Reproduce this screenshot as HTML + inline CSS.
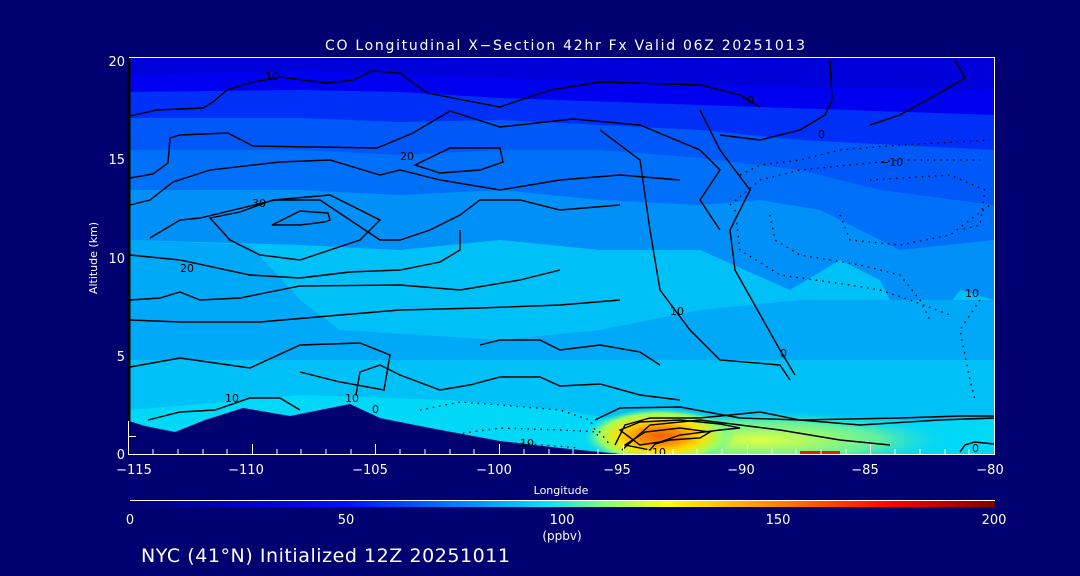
<!DOCTYPE html>
<html><head><meta charset="utf-8"><style>
html,body{margin:0;padding:0;background:#000070;width:1080px;height:576px;overflow:hidden}
svg{display:block}
text{font-family:"DejaVu Sans","Liberation Sans",sans-serif;fill:#fff}
</style></head><body>
<svg width="1080" height="576" viewBox="0 0 1080 576" xmlns="http://www.w3.org/2000/svg">
<defs>
<clipPath id="pc"><rect x="129" y="58" width="865" height="396"/></clipPath>
<linearGradient id="cb" x1="0" x2="1" y1="0" y2="0">
<stop offset="0" stop-color="#000070"/>
<stop offset="0.12" stop-color="#0000c0"/>
<stop offset="0.25" stop-color="#0010ff"/>
<stop offset="0.38" stop-color="#0080ff"/>
<stop offset="0.48" stop-color="#00e0ff"/>
<stop offset="0.55" stop-color="#80ff80"/>
<stop offset="0.62" stop-color="#ffff00"/>
<stop offset="0.75" stop-color="#ff8000"/>
<stop offset="0.88" stop-color="#ff0000"/>
<stop offset="1" stop-color="#800000"/>
</linearGradient>
<radialGradient id="hot" cx="0.5" cy="0.5" r="0.5">
<stop offset="0" stop-color="#f06000"/>
<stop offset="0.3" stop-color="#ff9000"/>
<stop offset="0.55" stop-color="#ffe000"/>
<stop offset="0.8" stop-color="#a0ff60"/>
<stop offset="1" stop-color="#40f0c0" stop-opacity="0"/>
</radialGradient>
<radialGradient id="glow" cx="0.5" cy="0.5" r="0.5">
<stop offset="0" stop-color="#e0ff40"/>
<stop offset="0.6" stop-color="#60f0a0"/>
<stop offset="1" stop-color="#00d0f8" stop-opacity="0"/>
</radialGradient>
</defs>
<g clip-path="url(#pc)">
<rect x="129" y="58" width="865" height="396" fill="#00c0f8"/>
<path d="M129 58H994V300L960 290 930 330 900 320 880 280 840 260 790 290 700 250 600 250 500 240 400 250 300 245 129 240Z" fill="#0090f8"/>
<path d="M129 240L250 245 300 300 340 330 129 320Z" fill="#00a8f8"/>
<path d="M129 320L340 330 500 340 600 330 700 310 800 300 994 300V360H129Z" fill="#00a8f8"/>
<path d="M129 58H994V240L900 250 820 210 760 200 700 205 600 200 500 190 400 195 300 190 129 190Z" fill="#0070f8"/>
<path d="M129 58H994V205L880 190 800 170 700 158 600 150 500 150 400 155 300 150 129 150Z" fill="#0058f8"/>
<path d="M129 58H994V150L800 140 700 130 600 125 500 120 400 122 300 118 129 118Z" fill="#0030f8"/>
<path d="M129 58H994V115L700 105 500 98 400 92 300 90 129 92Z" fill="#0000f0"/>
<path d="M129 58H994V90L700 85 500 78 300 70 129 75Z" fill="#0000d8"/>
<path d="M129 410L300 395 450 400 560 410 620 420 700 420 800 420 994 420V454H129Z" fill="#00d8f8"/>
<ellipse cx="760" cy="440" rx="200" ry="30" fill="url(#glow)"/>
<ellipse cx="660" cy="436" rx="75" ry="28" fill="url(#hot)"/>
<rect x="800" y="451" width="40" height="3" fill="#e02000"/>
<path d="M129 421L145 426 175 432 205 420 243 408 290 416 320 410 350 404 380 418 430 428 500 441 560 448 620 454H129Z" fill="#000070"/>
<g fill="none" stroke="#000" stroke-width="1.4">
<path d="M130 116L157 110 203 108 213 102 227 90 253 82 280 77 327 83 353 80 373 71 400 73 427 93 500 107 550 90 600 82 700 85 740 95 760 107"/>
<path d="M130 178L153 174 168 163 170 138 180 135 228 133 253 146 377 148 413 133 450 111 500 127 573 119 640 125 700 150 720 170 700 200 720 230"/>
<path d="M130 205L150 200 173 182 210 170 280 162 330 160 380 175 400 170 440 180 500 190 560 180 620 175 680 180"/>
<path d="M150 238L180 220 200 218 275 200 320 200 350 220 380 240 400 240 430 230 460 215 480 200 520 200 560 210 620 205"/>
<path d="M210 218L240 212 273 200 330 195 360 210 380 220 360 240 300 260 260 255 230 240Z"/>
<path d="M272 225L300 211 328 213 330 220 325 222 300 225Z"/>
<path d="M415 165L450 148 500 148 503 162 480 170 440 173Z"/>
<path d="M130 255L180 260 250 275 300 278 350 272 400 270 440 262 460 250 460 230"/>
<path d="M130 300L160 298 180 292 200 300 240 298 300 286 400 285 460 290 520 280 560 270"/>
<path d="M130 320L180 322 260 322 340 315 400 310 480 308 560 305 620 300"/>
<path d="M130 367L180 358 250 368 300 345 360 343 390 355 384 390 340 382 300 372"/>
<path d="M148 420L180 412 215 410 250 398 280 398 300 410"/>
<path d="M356 395L360 372 380 365 400 375 440 390 470 385 500 377 540 377 560 386 600 384 640 395 680 400"/>
<path d="M480 345L500 340 540 340 560 350 600 345 640 352 660 365"/>
<path d="M600 130L640 160 650 230 660 290 690 330 720 360 780 365 790 380"/>
<path d="M700 110L720 150 750 190 730 230 735 270 780 350 795 375"/>
<path d="M830 60L832 100 825 115 800 130 760 140 720 135"/>
<path d="M955 60L965 78 945 90 900 115 870 125"/>
<path d="M620 430L640 422 680 420 720 424 740 428 720 430 680 435 660 442 640 445Z"/>
<path d="M625 445L645 432 680 428 710 432 700 438 670 440 655 444 650 450Z"/>
<path d="M622 450L650 425 700 420 740 425 780 430 840 440 890 445"/>
<path d="M615 445L625 425 650 418 700 418 760 412 800 420 860 425 940 420 994 418"/>
<path d="M595 420L620 408 680 407 740 418 800 420 900 418 960 416 994 416"/>
<path d="M960 452L965 445 975 442 994 444"/>
</g>
<g fill="none" stroke="#000" stroke-width="1.3" stroke-dasharray="1.5 5">
<path d="M740 175L760 165 800 160 840 150 900 145 990 140"/>
<path d="M730 205L760 180 800 170 850 165 900 160 980 160"/>
<path d="M735 210L740 250 780 275 850 285 880 290 910 300 950 315"/>
<path d="M770 215L775 240 800 255 860 265 900 275 920 300 930 320"/>
<path d="M840 215L850 240 900 245 950 235 990 205"/>
<path d="M870 180L950 175 985 190 980 225 960 230"/>
<path d="M980 300L960 330 970 380 975 400"/>
<path d="M420 410L460 402 500 405 560 410 590 420 600 440"/>
<path d="M450 435L500 428 560 430 600 432 610 445"/>
<path d="M470 447L520 443 580 448"/>
</g>
<g font-size="11">
<text x="265" y="80" style="fill:#000">10</text>
<text x="740" y="104" style="fill:#000">10</text>
<text x="400" y="160" style="fill:#000">20</text>
<text x="252" y="207" style="fill:#000">30</text>
<text x="180" y="272" style="fill:#000">20</text>
<text x="225" y="402" style="fill:#000">10</text>
<text x="818" y="138" style="fill:#000">0</text>
<text x="880" y="166" style="fill:#000">−10</text>
<text x="670" y="315" style="fill:#000">10</text>
<text x="780" y="357" style="fill:#000">0</text>
<text x="965" y="297" style="fill:#000">10</text>
<text x="345" y="402" style="fill:#000">10</text>
<text x="372" y="413" style="fill:#000">0</text>
<text x="520" y="447" style="fill:#000">10</text>
<text x="652" y="456" style="fill:#000">10</text>
<text x="972" y="452" style="fill:#000">0</text>
</g>
</g>
<g stroke="#fff" stroke-width="1">
<line x1="129" y1="57.5" x2="994" y2="57.5"/>
<line x1="994.5" y1="57" x2="994.5" y2="454"/>
<line x1="128" y1="454.5" x2="995" y2="454.5"/>
</g>
<line x1="129" y1="58" x2="129" y2="421" stroke="#000" stroke-width="3"/>
<g stroke="#fff" stroke-width="1">
<path d="M128.5 421V454M128 436.5H136"/>
<path d="M128.5 454V444M252.5 454V444M375.5 454V444M499.5 454V444M623.5 454V444M747.5 454V444M870.5 454V444M994.5 454V444"/>
<path d="M153 454V449M178 454V449M203 454V449M227 454V449M277 454V449M301 454V449M326 454V449M351 454V449M400 454V449M425 454V449M450 454V449M474 454V449M524 454V449M549 454V449M573 454V449M598 454V449M648 454V449M673 454V449M697 454V449M722 454V449M772 454V449M796 454V449M821 454V449M846 454V449M895 454V449M920 454V449M945 454V449M969 454V449"/>
</g>
<text x="565" y="50" font-size="14" text-anchor="middle" textLength="480" lengthAdjust="spacing">CO Longitudinal X−Section 42hr  Fx Valid 06Z 20251013</text>
<g font-size="13" text-anchor="end">
<text x="125" y="66">20</text><text x="125" y="164">15</text><text x="125" y="263">10</text><text x="125" y="361">5</text><text x="125" y="459">0</text>
</g>
<text transform="translate(97 258) rotate(-90)" font-size="11" text-anchor="middle">Altitude (km)</text>
<g font-size="13" text-anchor="middle">
<text x="134" y="474">−115</text><text x="246" y="474">−110</text><text x="370" y="474">−105</text><text x="494" y="474">−100</text><text x="617" y="474">−95</text><text x="741" y="474">−90</text><text x="865" y="474">−85</text><text x="990" y="474">−80</text>
</g>
<text x="561" y="494" font-size="11" text-anchor="middle">Longitude</text>
<line x1="130" y1="500.5" x2="995" y2="500.5" stroke="#fff"/>
<rect x="130" y="501" width="865" height="6" fill="url(#cb)"/>
<g font-size="13" text-anchor="middle">
<text x="130" y="524">0</text><text x="346" y="524">50</text><text x="562" y="524">100</text><text x="778" y="524">150</text><text x="994" y="524">200</text>
</g>
<text x="562" y="540" font-size="12" text-anchor="middle">(ppbv)</text>
<text x="141" y="562" font-size="19" textLength="369" lengthAdjust="spacing">NYC (41°N) Initialized 12Z 20251011</text>
</svg>
</body></html>
